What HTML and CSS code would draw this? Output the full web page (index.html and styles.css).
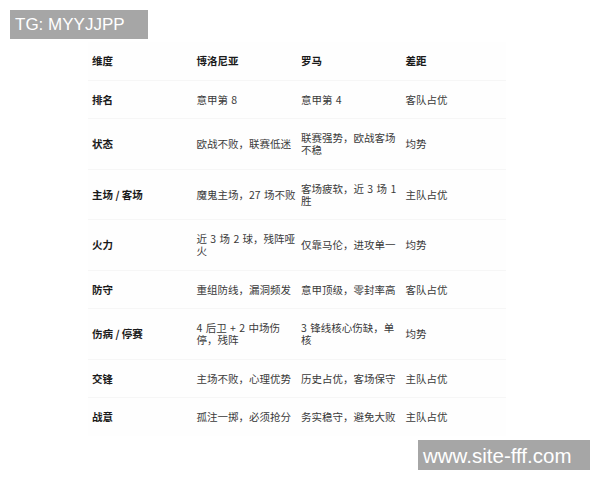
FILE: index.html
```html
<!DOCTYPE html>
<html lang="zh">
<head>
<meta charset="utf-8">
<link rel="stylesheet" href="styles.css">
</head>
<body>
<div class="page">
  <div class="wm wm-top">TG: MYYJJPP</div>
  <table class="cmp">
    <tr class="head"><th>维度</th><th>博洛尼亚</th><th>罗马</th><th>差距</th></tr>
    <tr><th>排名</th><td>意甲第 8</td><td>意甲第 4</td><td>客队占优</td></tr>
    <tr><th>状态</th><td>欧战不败，联赛低迷</td><td>联赛强势，欧战客场不稳</td><td>均势</td></tr>
    <tr><th>主场 / 客场</th><td>魔鬼主场，27 场不败</td><td>客场疲软，近 3 场 1 胜</td><td>主队占优</td></tr>
    <tr><th>火力</th><td>近 3 场 2 球，残阵哑火</td><td>仅靠马伦，进攻单一</td><td>均势</td></tr>
    <tr><th>防守</th><td>重组防线，漏洞频发</td><td>意甲顶级，零封率高</td><td>客队占优</td></tr>
    <tr><th>伤病 / 停赛</th><td>4 后卫 + 2 中场伤停，残阵</td><td>3 锋线核心伤缺，单核</td><td>均势</td></tr>
    <tr><th>交锋</th><td>主场不败，心理优势</td><td>历史占优，客场保守</td><td>主队占优</td></tr>
    <tr><th>战意</th><td>孤注一掷，必须抢分</td><td>务实稳守，避免大败</td><td>主队占优</td></tr>
  </table>
  <div class="wm wm-bottom">www.site-fff.com</div>
</div>
</body>
</html>
```

FILE: styles.css
```css
html, body {
  margin: 0;
  padding: 0;
  background: #ffffff;
}
.page {
  position: relative;
  width: 600px;
  height: 480px;
  overflow: hidden;
}
.cmp {
  position: absolute;
  left: 88px;
  top: 42px;
  width: 418px;
  border-collapse: collapse;
  table-layout: fixed;
  font-family: "Noto Sans CJK SC", "Liberation Sans", sans-serif;
  font-size: 10.5px;
  line-height: 12px;
  color: #3a3a3a;
  background: #fefefe;
}
.cmp th, .cmp td {
  text-align: left;
  vertical-align: middle;
  padding: 13px 0 12.5px 4px;
  border-bottom: 1px solid #f6f6f6;
}
.cmp tr:last-child th, .cmp tr:last-child td {
  border-bottom: none;
}
.cmp th {
  font-weight: 700;
  color: #1a1a1a;
}
.cmp td {
  font-weight: 400;
  word-spacing: 1px;
}
.wm {
  position: absolute;
  background: #a6a6a6;
  color: #ffffff;
  font-family: "Liberation Sans", Arial, sans-serif;
}
.wm-top {
  left: 10px;
  top: 10px;
  width: 133px;
  height: 29px;
  line-height: 29px;
  font-size: 17px;
  padding-left: 5px;
}
.wm-bottom {
  left: 418px;
  top: 440px;
  width: 167px;
  height: 30px;
  line-height: 31px;
  font-size: 20.5px;
  padding-left: 5px;
  white-space: nowrap;
}
```
